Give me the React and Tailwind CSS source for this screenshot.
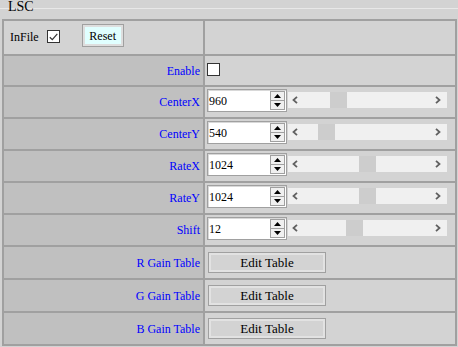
import React from 'react';

const serif = { fontFamily: '"Liberation Serif", "Times New Roman", serif' };

const numRows = [
  { label: 'CenterX', value: '960', thumb: 'ml-[26px]' },
  { label: 'CenterY', value: '540', thumb: 'ml-[14px]' },
  { label: 'RateX', value: '1024', thumb: 'ml-[55px]' },
  { label: 'RateY', value: '1024', thumb: 'ml-[55px]' },
  { label: 'Shift', value: '12', thumb: 'ml-[42px]' },
];

const tables = ['R Gain Table', 'G Gain Table', 'B Gain Table'];

const Check = ({ checked }) => (
  <div className="w-[13px] h-[13px] border border-[#333] bg-white flex items-center justify-center">
    {checked && (
      <svg width="9" height="8" viewBox="0 0 9 8">
        <path d="M0.8 4.2 L3.3 6.6 L8.3 0.8" stroke="#333" strokeWidth="1.2" fill="none" />
      </svg>
    )}
  </div>
);

const Label = ({ children }) => (
  <div className="bg-[#c0c0c0] flex items-center justify-end pr-[3px] text-[12px] text-[#0000ff]">
    {children}
  </div>
);

const Chevron = ({ right }) => (
  <svg width="6" height="8" viewBox="0 0 6 8">
    <path
      d={right ? 'M1 0.8 L4.5 4 L1 7.2' : 'M5 0.8 L1.5 4 L5 7.2'}
      stroke="#606060"
      strokeWidth="1.8"
      fill="none"
    />
  </svg>
);

const NumBox = ({ value }) => (
  <div className="flex items-center w-[80px] h-[23px] border border-[#a0a0a0] bg-white shadow-[inset_1px_1px_0_#d8d8d8]">
    <span className="flex-1 pl-[1px] text-[12px] text-black leading-none">{value}</span>
    <div className="flex flex-col w-[15px] h-[19px] mr-[1px] border border-[#a0a0a0] bg-[#f0f0f0]">
      <div className="flex-1 flex items-center justify-center border-b border-[#a0a0a0]">
        <svg width="7" height="4" viewBox="0 0 7 4"><path d="M0 4 L3.5 0 L7 4Z" fill="#000" /></svg>
      </div>
      <div className="flex-1 flex items-center justify-center">
        <svg width="7" height="4" viewBox="0 0 7 4"><path d="M0 0 L3.5 4 L7 0Z" fill="#000" /></svg>
      </div>
    </div>
  </div>
);

const Slider = ({ thumb }) => (
  <div className="flex items-center w-[159px] h-[16px] ml-[1px] mt-[3px] bg-[#f0f0f0]">
    <div className="w-[16px] h-full flex items-center pl-[4px]">
      <Chevron />
    </div>
    <div className="flex-1 h-full flex">
      <div className={`${thumb} w-[17px] h-full bg-[#cdcdcd]`} />
    </div>
    <div className="w-[16px] h-full flex items-center justify-end pr-[6px]">
      <Chevron right />
    </div>
  </div>
);

export default function App() {
  return (
    <div className="w-[458px] h-[347px] bg-[#d3d3d3] overflow-hidden" style={serif}>
      <div className="relative h-[19px]">
        <div className="absolute inset-x-0 top-[8px] border-t border-[#e8e8e8]" />
        <span className="relative block pl-[8px] text-[14px] leading-[14px] text-black">LSC</span>
      </div>

      <div className="ml-[2px] w-[455px] bg-[#a0a0a0] p-[2px] grid grid-cols-[199px_250px] grid-rows-[33px_29px_30px_30px_30px_30px_30px_31px_31px_31px] gap-[2px]">
        <div className="bg-[#d3d3d3] flex items-start pl-[6px] text-[12px] text-black">
          <span className="mt-[9px] leading-[14px]">InFile</span>
          <div className="ml-[8px] mt-[9px]">
            <Check checked />
          </div>
          <button className="ml-[22px] mt-[3px] w-[42px] h-[23px] border border-[#a0a0a0] bg-[#e0ffff] shadow-[inset_0_0_0_2px_#dedede] text-[12px] text-black">
            Reset
          </button>
        </div>
        <div className="bg-[#d3d3d3]" />

        <Label>Enable</Label>
        <div className="bg-[#d3d3d3] pl-[2px] pt-[7px]">
          <Check />
        </div>

        {numRows.map((r) => (
          <React.Fragment key={r.label}>
            <Label>{r.label}</Label>
            <div className="bg-[#d3d3d3] flex items-start pl-[2px] pt-[2px]">
              <NumBox value={r.value} />
              <Slider thumb={r.thumb} />
            </div>
          </React.Fragment>
        ))}

        {tables.map((t) => (
          <React.Fragment key={t}>
            <Label>{t}</Label>
            <div className="bg-[#d3d3d3] pl-[3px] pt-[3px]">
              <button className="w-[118px] h-[21px] border border-[#a0a0a0] bg-[#d3d3d3] shadow-[inset_0_0_0_2px_#e2e2e2] text-[13px] text-black leading-none">
                Edit Table
              </button>
            </div>
          </React.Fragment>
        ))}
      </div>
    </div>
  );
}
